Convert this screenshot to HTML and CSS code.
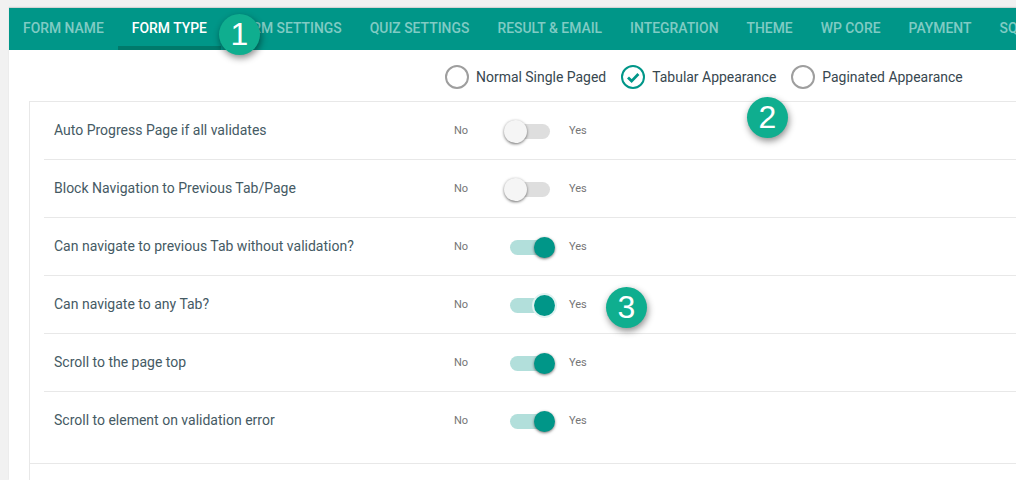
FILE: index.html
```html
<!DOCTYPE html>
<html lang="en">
<head>
<meta charset="utf-8">
<title>Form Type</title>
<link rel="stylesheet" href="styles.css">
</head>
<body>
<main class="panel">
  <nav class="tabs">
    <a class="tab">Form Name</a>
    <a class="tab active">Form Type</a>
    <a class="tab">Form Settings</a>
    <a class="tab">Quiz Settings</a>
    <a class="tab">Result &amp; Email</a>
    <a class="tab">Integration</a>
    <a class="tab">Theme</a>
    <a class="tab">WP Core</a>
    <a class="tab">Payment</a>
    <a class="tab">Square</a>
  </nav>
  <div class="options">
    <label class="option"><span class="radio"></span>Normal Single Paged</label>
    <label class="option"><span class="radio checked"><svg viewBox="0 0 24 24" width="24" height="24"><path d="M7 12.5l3.6 3.6L17.4 9" fill="none" stroke="#009688" stroke-width="2.8"/></svg></span>Tabular Appearance</label>
    <label class="option"><span class="radio"></span>Paginated Appearance</label>
  </div>
  <div class="settings">
    <div class="group">
      <div class="row"><span class="name">Auto Progress Page if all validates</span><span class="state">No</span><span class="switch"><i class="track"></i><i class="knob"></i></span><span class="state">Yes</span></div>
      <div class="row"><span class="name">Block Navigation to Previous Tab/Page</span><span class="state">No</span><span class="switch"><i class="track"></i><i class="knob"></i></span><span class="state">Yes</span></div>
      <div class="row"><span class="name">Can navigate to previous Tab without validation?</span><span class="state">No</span><span class="switch on"><i class="track"></i><i class="knob"></i></span><span class="state">Yes</span></div>
      <div class="row"><span class="name">Can navigate to any Tab?</span><span class="state">No</span><span class="switch on focus"><i class="track"></i><i class="knob"></i></span><span class="state">Yes</span></div>
      <div class="row"><span class="name">Scroll to the page top</span><span class="state">No</span><span class="switch on"><i class="track"></i><i class="knob"></i></span><span class="state">Yes</span></div>
      <div class="row last"><span class="name">Scroll to element on validation error</span><span class="state">No</span><span class="switch on"><i class="track"></i><i class="knob"></i></span><span class="state">Yes</span></div>
    </div>
  </div>
  <span class="badge b1">1</span>
  <span class="badge b2">2</span>
  <span class="badge b3">3</span>
</main>
</body>
</html>
```
FILE: styles.css
```css
html, body {
  margin: 0;
  height: 480px;
  overflow: hidden;
  background: #f1f1f1;
}
body {
  padding: 8px 0 0 9px;
  box-sizing: border-box;
  font-family: Roboto, "Liberation Sans", sans-serif;
}
.panel {
  position: relative;
  background: #fff;
  height: 472px;
  box-shadow: 0 -1px 1px #d4d4d4;
}
.tabs {
  display: flex;
  height: 42px;
  background: #009688;
  white-space: nowrap;
  overflow: hidden;
}
.tab {
  flex: none;
  padding: 12px 14px 0;
  box-sizing: border-box;
  height: 42px;
  font-size: 13.92px;
  line-height: 16px;
  font-weight: 500;
  text-transform: uppercase;
  color: #80cbc4;
}
.tab.active {
  color: #fff;
  border-bottom: 4px solid #00796b;
}
.options {
  display: flex;
  align-items: center;
  gap: 15px;
  height: 51px;
  box-sizing: border-box;
  padding: 2px 0 0 436px;
}
.option {
  display: flex;
  align-items: center;
  gap: 7px;
  font-size: 13.96px;
  color: #37474f;
}
.radio {
  width: 24px;
  height: 24px;
  box-sizing: border-box;
  border: 2px solid #9e9e9e;
  border-radius: 50%;
  display: flex;
  align-items: center;
  justify-content: center;
}
.radio.checked { border-color: #009688; }
.radio svg { flex: none; }
.settings {
  margin-left: 20px;
  height: 400px;
  border-left: 1px solid #e8e8e8;
}
.group {
  border-top: 1px solid #e8e8e8;
  border-bottom: 1px solid #e8e8e8;
  padding-left: 14px;
}
.row {
  display: flex;
  align-items: center;
  height: 57px;
  padding-left: 10px;
  border-bottom: 1px solid #e8e8e8;
}
.row.last {
  height: 71px;
  padding-bottom: 14px;
  box-sizing: border-box;
  border-bottom: 0;
}
.name {
  width: 400px;
  flex: none;
  font-size: 14px;
  line-height: 16px;
  padding-bottom: 2px;
  color: #455a64;
}
.state {
  width: 56px;
  flex: none;
  font-size: 11px;
  color: #757575;
}
.switch {
  position: relative;
  flex: none;
  width: 40px;
  height: 15px;
  margin: 2px 19px 0 0;
}
.track {
  display: block;
  height: 15px;
  border-radius: 8px;
  background: #dedede;
}
.knob {
  position: absolute;
  top: -4px;
  left: -6px;
  width: 23px;
  height: 23px;
  border-radius: 50%;
  background: #f5f5f5;
  box-shadow: 0 1px 3px rgba(0,0,0,.55);
}
.on .track { background: #b2dfdb; }
.on .knob {
  top: -3px;
  left: 24px;
  width: 21px;
  height: 21px;
  background: #009688;
}
.focus .knob { box-shadow: 0 0 0 2px #e0f2f1; }
.badge {
  position: absolute;
  width: 41px;
  height: 41px;
  border-radius: 50%;
  background: #0fae8f;
  color: #fff;
  font: 32px/41px "Liberation Sans", sans-serif;
  text-align: center;
  box-shadow: 1px 3px 7px rgba(0,0,0,.45);
}
.b1 { left: 210px; top: 6px; }
.b2 { left: 738px; top: 89px; }
.b3 { left: 597px; top: 279px; }
```
